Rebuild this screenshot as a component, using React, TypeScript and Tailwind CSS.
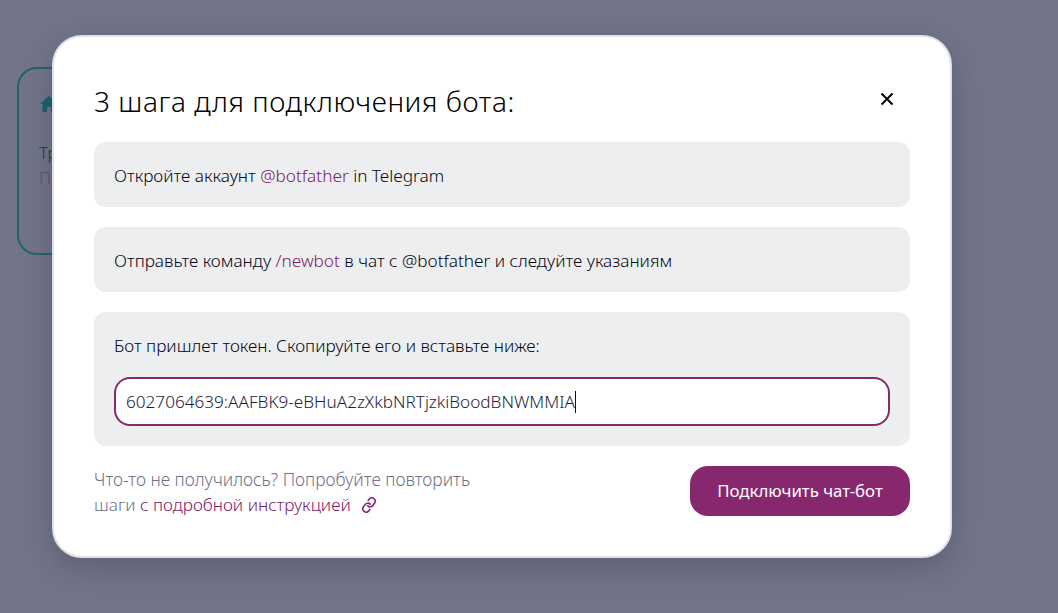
import React from "react";

export default function App() {
  return (
    <div className="relative h-[613px] w-full overflow-hidden bg-[#727588] font-['Noto_Sans','Open_Sans',sans-serif]">
      <div className="absolute left-[17px] top-[67px] h-[188px] w-[300px] rounded-[20px] border-2 border-[#23636f] px-[20px] pt-[27px]">
        <svg width="18" height="16" viewBox="0 0 18 16" className="ml-[1px] block fill-[#1f5f6c]"><path d="M9 0 0 8h2.500v8h4.500v-5h4v5h4.500V8H18z" /></svg>
        <div className="mt-[28px] text-[17px] font-light leading-[25px] text-[#2c2e44]">Тр</div>
        <div className="text-[17px] font-light leading-[25px] text-[#55576c]">П</div>
      </div>
      <div className="absolute left-[52px] top-[35px] flex h-[523px] w-[900px] flex-col rounded-[30px] border-2 border-[#dfe1e8] bg-white px-[40px] pt-[40px] shadow-[0_10px_30px_rgba(30,32,50,0.25)]">
        <div className="flex h-[65px] items-start justify-between">
          <h2 className="text-[28px] font-light leading-[48px] tracking-[0.55px] text-black">3 шага для подключения бота:</h2>
          <button className="mr-[15px] mt-[14px] text-black">
            <svg width="16" height="16" viewBox="0 0 16 16" fill="none" stroke="currentColor" strokeWidth="2"><path d="M2.500 2.500 13.500 13.500M13.500 2.500 2.500 13.500" /></svg>
          </button>
        </div>
        <div className="flex flex-col gap-[20px] text-[17.200px] font-light leading-[24px] text-[#050510]">
          <div className="flex h-[65px] items-center rounded-[12px] bg-[#edeef0] px-[20px]">
            <p className="pt-[2px]">Откройте аккаунт <span className="text-[#7c1a66]">@botfather</span> in Telegram</p>
          </div>
          <div className="flex h-[65px] items-center rounded-[12px] bg-[#edeef0] px-[20px]">
            <p className="pt-[2px]">Отправьте команду <span className="text-[#7c1a66]">/newbot</span> в чат с @botfather и следуйте указаниям</p>
          </div>
          <div className="flex h-[134px] flex-col rounded-[12px] bg-[#edeef0] px-[20px] pt-[22px]">
            <p>Бот пришлет токен. Скопируйте его и вставьте ниже:</p>
            <div className="mt-[19px] flex h-[49px] items-center rounded-[16px] border-2 border-[#87286f] bg-white px-[10px] text-[17.150px] text-[#1b1d3c]">
              <span>6027064639:AAFBK9-eBHuA2zXkbNRTjzkiBoodBNWMMIA</span>
              <span className="h-[22px] w-px bg-[#111]" />
            </div>
          </div>
        </div>
        <div className="mt-[20px] flex items-start justify-between">
          <p className="w-[400px] pt-[1px] text-[17.400px] font-light leading-[25px] text-[#6f7187]">
            Что-то не получилось? Попробуйте повторить{" "}
            <span className="text-[17.200px]">шаги </span>
            <span className="text-[17.200px] text-[#7c1a66]">с подробной инструкцией</span>
            <svg className="ml-[10px] inline-block align-[-2px]" width="16" height="16" viewBox="0 0 24 24" fill="none" stroke="#87286f" strokeWidth="2.400" strokeLinecap="round" strokeLinejoin="round"><g transform="rotate(-8 12 12)"><path d="M10 13a5 5 0 0 0 7.540.540l3-3a5 5 0 0 0-7.070-7.070l-1.720 1.710" /><path d="M14 11a5 5 0 0 0-7.540-.540l-3 3a5 5 0 0 0 7.070 7.070l1.710-1.710" /></g></svg>
          </p>
          <button className="flex h-[50px] w-[220px] items-center justify-center rounded-[18px] bg-[#87286f] text-[16.800px] text-white">Подключить чат-бот</button>
        </div>
      </div>
    </div>
  );
}
